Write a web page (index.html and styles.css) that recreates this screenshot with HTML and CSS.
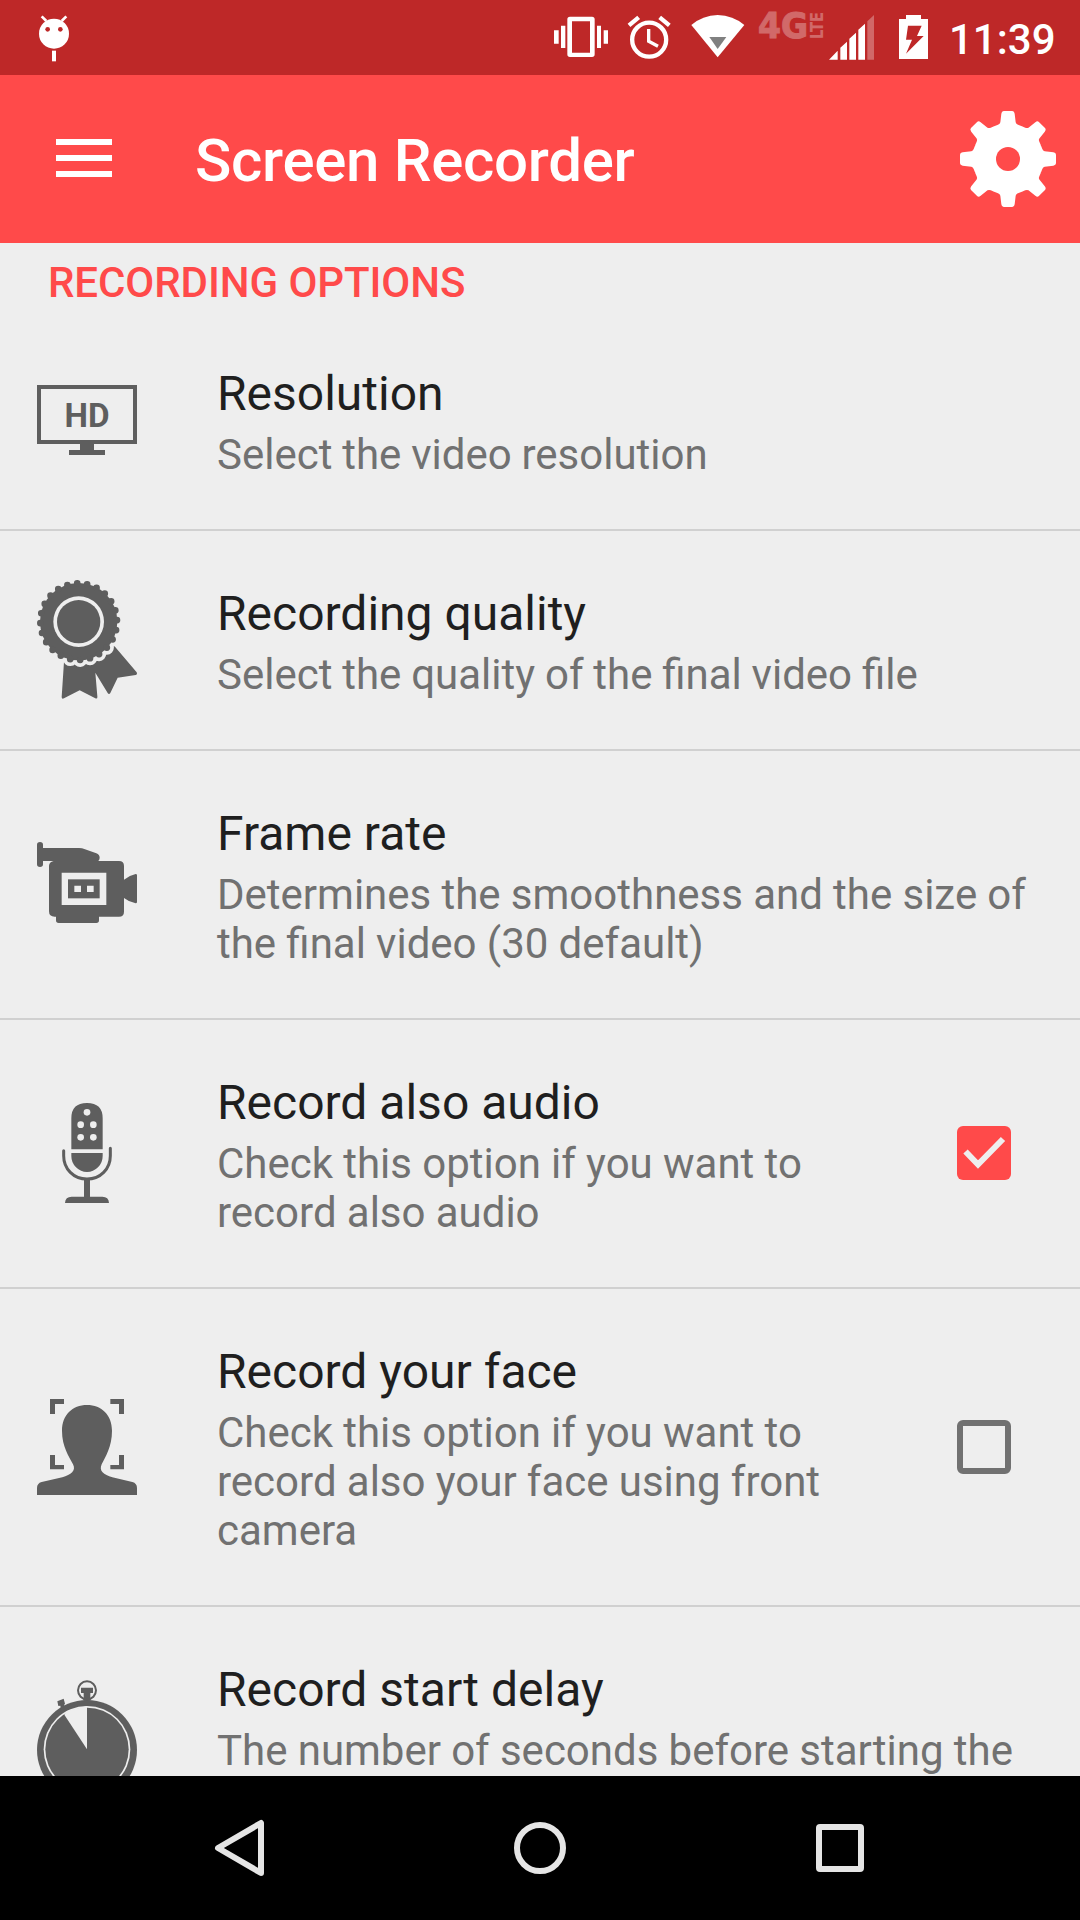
FILE: index.html
```html
<!DOCTYPE html>
<html lang="en">
<head>
<meta charset="utf-8">
<title>Screen Recorder</title>
<link rel="stylesheet" href="styles.css">
</head>
<body>
<div class="screen">
  <div class="status">
    <svg class="android" width="32" height="75" viewBox="114 0 96 225">
      <circle cx="162" cy="101" r="45"/>
      <path class="line" stroke-width="8" d="M125 49l14 14M199 49l-14 14"/>
      <rect x="156" y="152" width="12" height="32"/>
      <circle class="hole" cx="143" cy="88" r="7"/><circle class="hole" cx="181" cy="88" r="7"/>
    </svg>
    <svg class="vibrate" width="54" height="75" viewBox="42 0 162 225">
      <path d="M42 91h14v40H42zM63 77h13v67H63zM171 77h12v67h-12zM191 91h13v40h-13z"/>
      <path fill-rule="evenodd" d="M90 50h66q8 0 8 8v105q0 8-8 8H90q-8 0-8-8V58q0-8 8-8zM96 64v94h54V64z"/>
    </svg>
    <svg class="alarm" width="44" height="75" viewBox="262 0 132 225">
      <circle class="line" cx="328.500" cy="119" r="51" stroke-width="13"/>
      <path class="line" stroke-width="10" d="M327 87v37l28 15"/>
      <path class="line" stroke-width="13" d="M268 76l29-24M389 76l-29-24"/>
    </svg>
    <svg class="wifi" width="54" height="75" viewBox="452 0 162 225">
      <path d="M453 75Q487 46 532 45Q578 46 612 75L532 172z"/>
      <path fill="#808080" d="M507 111h51l-26 36z"/>
    </svg>
    <svg class="lte" width="66" height="75" viewBox="0 0 66 75">
      <text x="-1" y="38" font-size="36" stroke-width="1" textLength="50" lengthAdjust="spacingAndGlyphs">4G</text>
      <text transform="translate(64 39) rotate(-90)" font-size="17" textLength="27" lengthAdjust="spacingAndGlyphs">LTE</text>
    </svg>
    <svg class="signal" width="46" height="75" viewBox="56 0 138 225">
      <path d="M56 179l26-27v27zM90 179v-36l20-18v54zM117 179v-63l20-18v81zM144 179V89l20-18v108z"/>
      <path opacity=".3" d="M171 179V64l20-19v134z"/>
    </svg>
    <svg class="battery" width="30" height="75" viewBox="267 0 90 225">
      <path d="M288 45h45v12h21v120h-87V57h21z"/>
      <path class="hole" d="M294 77h41l-14 31h20l-53 53 18-42h-18z"/>
    </svg>
    <span class="clock">11:39</span>
  </div>
  <header class="appbar">
    <svg class="menu" width="56" height="38" viewBox="0 0 56 38"><path d="M0 0h56v6H0zM0 16h56v6H0zM0 32h56v6H0z"/></svg>
    <h1>Screen Recorder</h1>
    <svg class="gear" width="96" height="96" viewBox="-144 -144 288 288">
      <defs><path id="tooth" d="M0 0L-41.500-98.500L-30-103Q-24-105-23-110L-20-136Q-19-144-13-144H13Q19-144 20-136L23-110Q24-105 30-103L41.500-98.500z"/></defs>
      <circle r="103"/>
      <use href="#tooth"/><use href="#tooth" transform="rotate(45)"/><use href="#tooth" transform="rotate(90)"/><use href="#tooth" transform="rotate(135)"/><use href="#tooth" transform="rotate(180)"/><use href="#tooth" transform="rotate(225)"/><use href="#tooth" transform="rotate(270)"/><use href="#tooth" transform="rotate(315)"/>
      <circle class="hub" r="36"/>
    </svg>
  </header>
  <main class="list">
    <h2>RECORDING OPTIONS</h2>
    <section class="row">
      <svg class="icon tv" width="100" height="72" viewBox="0 0 100 72">
        <rect class="line" x="2" y="2" width="96" height="55" stroke-width="4"/>
        <path d="M43 59h14v6h11v5H32v-5h11z"/>
        <text class="hd" x="27.500" y="41.500" textLength="45" lengthAdjust="spacingAndGlyphs">HD</text>
      </svg>
      <div class="text tight"><h3>Resolution</h3><p>Select the video resolution</p></div>
    </section>
    <section class="row">
      <svg class="icon" width="100" height="120" viewBox="51 60 300 360">
        <path d="M133 290L125 411Q125 418 132 415L179 391L226 415Q233 418 232 409L226 338L263 399Q267 405 271 399L293 353L347 345Q353 343 350 337L276 250z"/>
        <g class="gap"><circle cx="176" cy="185" r="121"/><circle cx="176" cy="185" r="114" fill="none" stroke-width="44" stroke-linecap="round" pathLength="24" stroke-dasharray="0 1" transform="rotate(-2.300 176 185)"/></g>
        <circle cx="176" cy="185" r="116"/>
        <circle class="line" cx="176" cy="185" r="115" stroke-width="20" stroke-linecap="round" pathLength="24" stroke-dasharray="0 1" transform="rotate(-2.300 176 185)"/>
        <circle class="gap" cx="176" cy="185" r="76"/><circle cx="176" cy="185" r="65"/>
      </svg>
      <div class="text tight"><h3>Recording quality</h3><p>Select the quality of the final video file</p></div>
    </section>
    <section class="row">
      <svg class="icon odd" width="100" height="100" viewBox="51 42 300 300">
        <path d="M51 74q0-8 9-8t9 8v10h108q9 0 18 4l34 12q10 4 10 13 0 5-4 10h62q15 0 15 15v41q14-12 35-17 4 0 4 4v80q0 4-4 4-20-4-35-16v41q0 15-15 15h-60v11q0 8-8 8H116q-8 0-8-8v-11h-4q-17 0-17-16V138q0-12 14-15H69v10q0 8-9 8t-9-8z"/>
        <path class="gap" d="M125 158h134v97H125z"/><path d="M144 178h95v57h-95z"/>
        <path class="gap" d="M163 197h20v19h-20zM201 197h20v19h-20z"/>
      </svg>
      <div class="text"><h3>Frame rate</h3><p>Determines the smoothness and the size of<br>the final video (30 default)</p></div>
    </section>
    <section class="row">
      <svg class="icon odd" width="100" height="100" viewBox="-9 69 300 300">
        <path d="M94 208v-93q0-46 47-46t47 46v93zM94 219h94v9q0 20-14 34t-33 14-33-14-14-34zM132 295h18v55h-18zM75 369q1-19 20-19h92q19 0 20 19z"/>
        <path class="line" stroke-width="9" stroke-linecap="round" d="M71 212v15q0 30 20 50 20 20 50 20t50-20q20-20 20-50v-22"/>
        <g class="gap"><circle cx="141" cy="97" r="10"/><circle cx="122" cy="134" r="10"/><circle cx="160" cy="134" r="10"/><circle cx="122" cy="172" r="10"/><circle cx="160" cy="172" r="10"/></g>
      </svg>
      <div class="text"><h3>Record also audio</h3><p>Check this option if you want to<br>record also audio</p></div>
      <svg class="check odd" width="54" height="54" viewBox="0 0 54 54"><rect width="54" height="54" rx="6"/><path d="M8.500 25.500L21 38.500L46 13"/></svg>
    </section>
    <section class="row">
      <svg class="icon" width="100" height="100" viewBox="51 51 300 300">
        <path d="M90 57h42v15h-27v30H90zM271 57h41v45h-15V72h-26zM90 225h15v30h27v13H90zM312 225v43h-41v-13h26v-30z"/>
        <path d="M201 75c44 0 75 30 75 77 0 48-20 79-31 101-9 21 6 31 32 39l60 14q14 4 14 18v21H51v-21q0-14 14-18l62-14c26-8 42-19 32-39-12-24-33-53-33-101 0-47 31-77 75-77z"/>
      </svg>
      <div class="text"><h3>Record your face</h3><p>Check this option if you want to<br>record also your face using front<br>camera</p></div>
      <div class="check empty"></div>
    </section>
    <section class="row">
      <svg class="icon odd" width="100" height="120" viewBox="51 60 300 360">
        <circle cx="201" cy="270" r="150"/>
        <circle class="gap" cx="201" cy="268" r="130"/><circle cx="201" cy="268" r="125"/>
        <path class="gap" d="M201 268L133 164L141 153L201 138z"/>
        <circle class="line" cx="201" cy="91" r="27" stroke-width="6"/>
        <path d="M183 83h36v16h-8v23h-20V99h-8zM112 124l19-8 4 15-3 4 3 7-12 6-2-11-6 1z"/>
      </svg>
      <div class="text"><h3>Record start delay</h3><p>The number of seconds before starting the<br>&nbsp;</p></div>
    </section>
  </main>
  <nav class="nav">
    <svg width="60" height="60" viewBox="0 0 60 60"><path d="M51 5v50L8 30z"/></svg>
    <svg width="60" height="60" viewBox="0 0 60 60"><circle cx="30" cy="30" r="23"/></svg>
    <svg width="60" height="60" viewBox="0 0 60 60"><rect x="9" y="9" width="42" height="42" rx="1"/></svg>
  </nav>
</div>
</body>
</html>
```
FILE: styles.css
```css
* { box-sizing: border-box; margin: 0; padding: 0; }
body { font-family: Roboto, sans-serif; background: #eee; }
svg { display: block; flex: none; }
.screen { width: 1080px; height: 1920px; display: flex; flex-direction: column; overflow: hidden; }
.line { fill: none; }

.status { flex: none; height: 75px; background: #be2828; display: flex; padding-left: 38px; fill: #fff; }
.status .line { stroke: #fff; }
.status .hole { fill: #be2828; }
.vibrate { margin-left: 484px; }
.alarm { margin-left: 19px; }
.wifi { margin-left: 20px; }
.lte { margin-left: 14px; opacity: .3; overflow: visible; stroke: #fff; stroke-width: 0; font-family: "DejaVu Sans", sans-serif; font-weight: 700; }
.signal { margin-left: 4px; }
.battery { margin-left: 24px; }
.clock { margin-left: 20px; color: #fff; font-size: 42px; font-weight: 500; line-height: 49px; padding-top: 15px; }

.appbar { flex: none; height: 168px; background: #ff4a4a; display: flex; align-items: center; padding: 0 24px 0 56px; fill: #fff; }
.menu { position: relative; top: -1px; }
.appbar h1 { flex: 1; margin-left: 83px; padding-top: 4px; color: #fff; font-size: 60px; font-weight: 500; line-height: 70px; letter-spacing: -.3px; white-space: nowrap; }
.hub { fill: #ff4a4a; }

.list { flex: 1; min-height: 0; overflow: hidden; background: #eee; }
.list h2 { height: 68px; padding: 15px 0 0 48px; color: #ff4a4a; font-size: 42px; font-weight: 500; line-height: 49px; letter-spacing: -.07px; }
.row { display: flex; align-items: center; padding: 0 69px 0 37px; border-bottom: 2px solid #d0d0d0; }
.icon { fill: #5e5e5e; }
.icon .line { fill: none; stroke: #5e5e5e; }
.icon .gap { fill: #eee; stroke: #eee; stroke-width: 0; }
.tv { margin-top: 2px; }
.odd { margin-bottom: 1px; }
.hd { font-size: 33px; font-weight: 700; }
.text { flex: 1; margin-left: 80px; padding: 54px 0 50px; white-space: nowrap; }
.text h3 { color: #1f1f1f; font-size: 48px; font-weight: 400; line-height: 57px; padding-bottom: 8px; }
.text p { color: #717171; font-size: 42px; line-height: 49px; word-spacing: -.2px; }
.tight p { word-spacing: -.6px; }
.check { flex: none; width: 54px; height: 54px; fill: #ff4a4a; }
.check path { fill: none; stroke: #eee; stroke-width: 6; }
.empty { border: 6px solid #717171; border-radius: 6px; }

.nav { flex: none; height: 144px; background: #000; display: flex; align-items: center; justify-content: center; gap: 240px; }
.nav svg { fill: none; stroke: #e5e5e5; stroke-width: 6; stroke-linejoin: round; }
```
